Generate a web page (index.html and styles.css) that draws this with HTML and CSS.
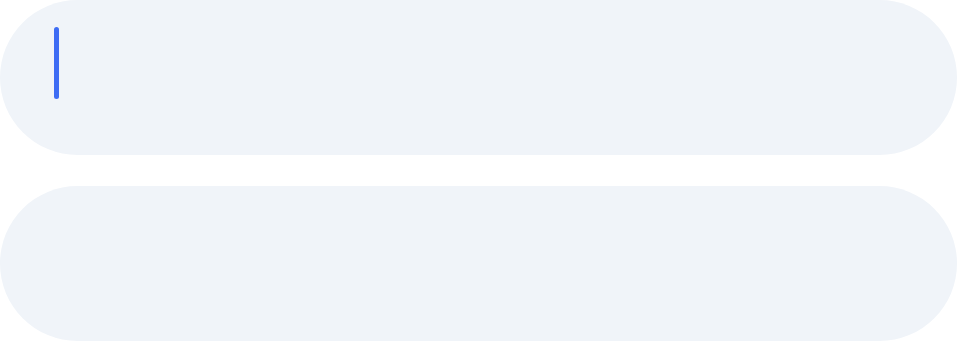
FILE: index.html
```html
<!DOCTYPE html>
<html lang="en">
<head>
<meta charset="utf-8">
<link rel="stylesheet" href="styles.css">
</head>
<body>
  <div class="stack">
    <div class="field field--active"><span class="caret"></span></div>
    <div class="field"></div>
  </div>
</body>
</html>
```
FILE: styles.css
```css
html, body {
  margin: 0;
  padding: 0;
  background: #ffffff;
  font-family: "Inter", "Liberation Sans", sans-serif;
}
.stack {
  display: flex;
  flex-direction: column;
  gap: 31px;
  width: 957px;
}
.field {
  height: 155px;
  border-radius: 78px;
  background: #f0f4f9;
  display: flex;
  align-items: flex-start;
  padding: 27px 0 0 54px;
  box-sizing: border-box;
}
.caret {
  display: block;
  width: 5px;
  height: 72px;
  border-radius: 3px;
  background: #3d6cf4;
}
```
